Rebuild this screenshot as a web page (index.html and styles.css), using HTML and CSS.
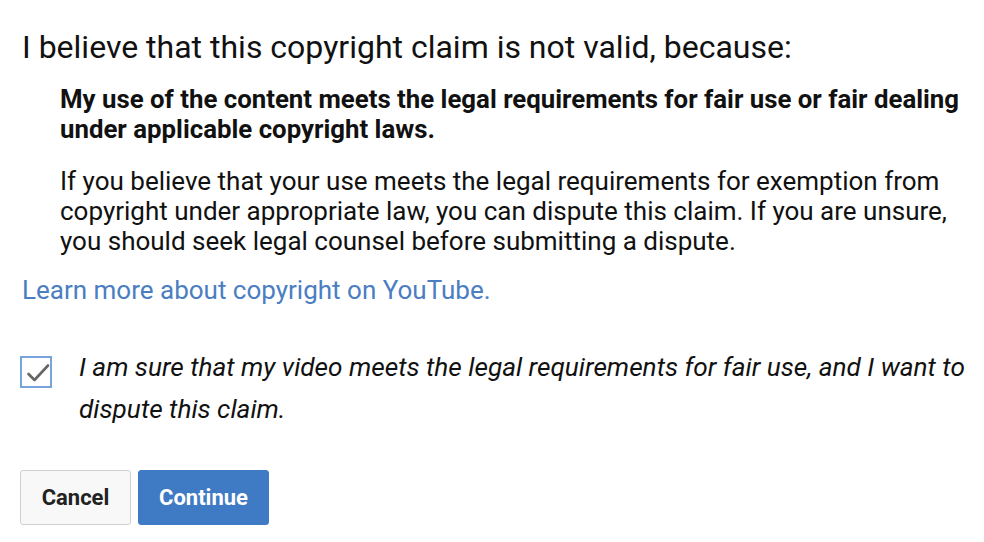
FILE: index.html
```html
<!DOCTYPE html>
<html>
<head>
<meta charset="utf-8">
<link rel="stylesheet" href="styles.css">
</head>
<body>
<div class="page">
  <h1 class="title">I believe that this copyright claim is not valid, because:</h1>
  <div class="reason">
    <p class="reason-title">My use of the content meets the legal requirements for fair use or fair dealing under applicable copyright laws.</p>
    <p class="reason-text">If you believe that your use meets the legal requirements for exemption from copyright under appropriate law, you can dispute this claim. If you are unsure, you should seek legal counsel before submitting a dispute.</p>
  </div>
  <a class="learn" href="#">Learn more about copyright on YouTube.</a>
  <label class="confirm">
    <svg class="checkbox" width="32" height="32" viewBox="0 0 32 32">
      <rect x="1" y="1" width="30" height="30" fill="#fff" stroke="#79a3dc" stroke-width="2"/>
      <path d="M8.5 18 L14.5 24 L28 9.5" fill="none" stroke="#666" stroke-width="2.6" stroke-linecap="round" stroke-linejoin="round"/>
    </svg>
    <span class="confirm-text">I am sure that my video meets the legal requirements for fair use, and I want to dispute this claim.</span>
  </label>
  <div class="actions">
    <button class="btn btn-cancel">Cancel</button>
    <button class="btn btn-continue">Continue</button>
  </div>
</div>
</body>
</html>
```
FILE: styles.css
```css
html, body {
  margin: 0;
  padding: 0;
  background: #fff;
}
body {
  font-family: Roboto, "Liberation Sans", sans-serif;
  color: #111;
}
.page {
  padding: 27px 16px 0 22px;
}
.title {
  margin: 0;
  font-size: 32px;
  font-weight: 400;
  line-height: 40px;
  color: #111;
}
.reason {
  padding-left: 38px;
  margin-top: 17px;
}
.reason-title {
  margin: 0;
  font-size: 25.8px;
  font-weight: 700;
  line-height: 30px;
}
.reason-text {
  margin: 22px 0 0 0;
  font-size: 26px;
  line-height: 30px;
}
.learn {
  display: block;
  margin-top: 19px;
  font-size: 26px;
  line-height: 30px;
  color: #4a7ec1;
  text-decoration: none;
}
.confirm {
  display: flex;
  align-items: flex-start;
  margin-top: 41px;
  margin-left: -2px;
}
.checkbox {
  flex: none;
  display: block;
  margin-top: 10px;
}
.confirm-text {
  margin-left: 27px;
  font-size: 26.2px;
  font-style: italic;
  line-height: 42px;
}
.actions {
  display: flex;
  gap: 7px;
  margin-top: 40px;
  margin-left: -2px;
}
.btn {
  font-family: Roboto, "Liberation Sans", sans-serif;
  font-size: 22px;
  font-weight: 700;
  height: 55px;
  border-radius: 3px;
  cursor: pointer;
  padding: 0;
}
.btn-cancel {
  width: 111px;
  background: #f8f8f8;
  border: 1px solid #d0d0d0;
  color: #222;
}
.btn-continue {
  width: 131px;
  background: #3f7ac4;
  border: 1px solid #3f7ac4;
  color: #fff;
}
```
